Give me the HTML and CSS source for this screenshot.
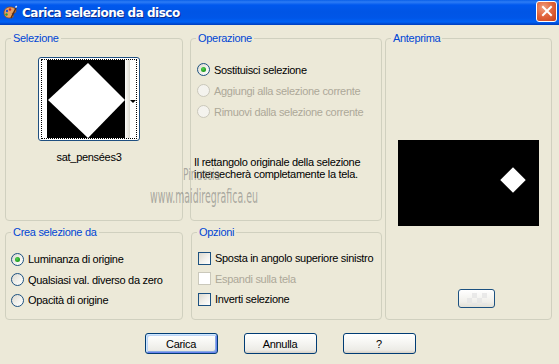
FILE: index.html
```html
<!DOCTYPE html>
<html>
<head>
<meta charset="utf-8">
<link rel="stylesheet" href="styles.css">
</head>
<body>
<div class="window">
  <div class="titlebar">
    <svg class="app-icon" width="16" height="16" viewBox="0 0 16 16">
      <path d="M2 8c0-4 3-6 6-6 4 0 6 2 6 4 0 2-2 2-3 2s-1 1 0 2c1 1 0 3-3 3-4 0-6-2-6-5z" fill="#E8A060" stroke="#8A4A1A" stroke-width="0.8"/>
      <circle cx="5" cy="6" r="1.2" fill="#2050D0"/>
      <circle cx="8" cy="4.5" r="1.2" fill="#D02020"/>
      <circle cx="4.5" cy="9.5" r="1.2" fill="#20A040"/>
      <path d="M9 13l5-10" stroke="#603010" stroke-width="1.6"/>
      <path d="M13.5 2.5l1.2-1.5" stroke="#F0F0F0" stroke-width="1.4"/>
    </svg>
    <span class="title">Carica selezione da disco</span>
    <div class="close">
      <svg width="12" height="12" viewBox="0 0 12 12"><path d="M2 2l8 8M10 2l-8 8" stroke="#fff" stroke-width="2" stroke-linecap="square"/></svg>
    </div>
  </div>
  <div class="body">
    <div class="groups">
      <fieldset class="grp g-sel">
        <legend>Selezione</legend>
        <div class="sel-wrap">
          <div class="thumb">
            <div class="focus">
              <div class="thumb-img">
                <svg width="78" height="79" viewBox="0 0 78 79"><polygon points="41,3 78,40 41,78 1,40" fill="#fff"/></svg>
              </div>
              <div class="thumb-scroll"></div>
              <div class="thumb-arrow"><span class="tri"></span></div>
            </div>
          </div>
          <div class="thumb-label">sat_pensées3</div>
        </div>
      </fieldset>

      <fieldset class="grp g-op">
        <legend>Operazione</legend>
        <div class="list op-list">
          <div class="row"><span class="radio checked"></span><span>Sostituisci selezione</span></div>
          <div class="row disabled"><span class="radio"></span><span>Aggiungi alla selezione corrente</span></div>
          <div class="row disabled"><span class="radio"></span><span>Rimuovi dalla selezione corrente</span></div>
        </div>
        <p class="note">Il rettangolo originale della selezione<br>intersecherà completamente la tela.</p>
      </fieldset>

      <fieldset class="grp g-prev">
        <legend>Anteprima</legend>
        <div class="preview">
          <span class="dot"></span>
        </div>
        <div class="mini-btn"><span class="checker"></span></div>
      </fieldset>

      <fieldset class="grp g-crea">
        <legend>Crea selezione da</legend>
        <div class="list crea-list">
          <div class="row"><span class="radio checked"></span><span>Luminanza di origine</span></div>
          <div class="row"><span class="radio"></span><span>Qualsiasi val. diverso da zero</span></div>
          <div class="row"><span class="radio"></span><span>Opacità di origine</span></div>
        </div>
      </fieldset>

      <fieldset class="grp g-opt">
        <legend>Opzioni</legend>
        <div class="list opt-list">
          <div class="row"><span class="check"></span><span>Sposta in angolo superiore sinistro</span></div>
          <div class="row disabled"><span class="check"></span><span>Espandi sulla tela</span></div>
          <div class="row"><span class="check"></span><span>Inverti selezione</span></div>
        </div>
      </fieldset>
    </div>

    <div class="buttons">
      <div class="btn default">Carica</div>
      <div class="btn">Annulla</div>
      <div class="btn">?</div>
    </div>
  </div>
  <div class="watermark">
    <div class="wm1">Pinuccia</div>
    <div class="wm2">www.maidiregrafica.eu</div>
  </div>
</div>
</body>
</html>
```

FILE: styles.css
```css
* { box-sizing: border-box; }
html, body { margin: 0; padding: 0; }
body {
  width: 559px;
  height: 364px;
  overflow: hidden;
  background: #ECE9D8;
  font-family: "Liberation Sans", Arial, sans-serif;
  font-size: 11px;
  letter-spacing: -0.3px;
  color: #000;
}
.window { position: relative; width: 559px; height: 364px; background: #ECE9D8; }

.titlebar {
  height: 25px;
  display: flex;
  align-items: center;
  padding-left: 2px;
  background: linear-gradient(to bottom, #0A5FE8 0, #2D7CF5 2px, #0058EE 5px, #0055E5 12px, #0056E8 18px, #0062F5 22px, #0046CC 24px, #0040C0 25px);
}
.app-icon { flex: none; margin-right: 4px; }
.title {
  color: #fff;
  font-family: "DejaVu Sans", sans-serif;
  font-weight: bold;
  font-size: 12px;
  letter-spacing: -0.5px;
  text-shadow: 1px 1px 0 #0A2A8A;
  flex: 1;
}
.close {
  width: 21px;
  height: 21px;
  margin-right: 2px;
  margin-top: -3px;
  border: 1px solid #fff;
  border-radius: 3px;
  background: radial-gradient(circle at 35% 30%, #F0A080 0, #E2673F 45%, #C8401A 100%);
  display: flex;
  align-items: center;
  justify-content: center;
}

.body { padding: 7px 0 0 5px; }
.groups {
  display: grid;
  grid-template-columns: 178px 199px 170px;
  grid-template-rows: 189px 94px;
  row-gap: 5px;
}
.grp {
  margin: 0;
  padding: 0;
  min-width: 0;
  border: 1px solid #D0D0BF;
  border-radius: 4px;
}
.grp legend {
  color: #0046D5;
  padding: 0 2px;
  margin-left: 5px;
  line-height: 13px;
  font-size: 11px;
}
.g-sel { grid-column: 1; grid-row: 1; }
.g-op { grid-column: 2; grid-row: 1; margin-left: 7px; }
.g-prev { grid-column: 3; grid-row: 1 / span 2; margin-left: 3px; }
.g-crea { grid-column: 1; grid-row: 2; }
.g-opt { grid-column: 2; grid-row: 2; margin-left: 8px; }

/* Selezione */
.sel-wrap { padding: 12px 0 0 32px; }
.thumb {
  width: 102px;
  height: 84px;
  border: 1px solid #1F4F80;
  border-radius: 3px;
  background: #fff;
  padding: 1px 2px;
}
.focus {
  height: 100%;
  border: 1px dotted #000;
  display: flex;
  padding-left: 5px;
}
.thumb-img { width: 78px; background: #000; display: flex; align-items: center; }
.thumb-img svg { display: block; }
.thumb-scroll { width: 9px; background: linear-gradient(to right, #FAFAF8, #E6E4DC 70%, #D8D6CC); }
.thumb-arrow { flex: 1; display: flex; align-items: center; justify-content: center; padding-top: 4px; }
.tri { width: 0; height: 0; border-left: 3px solid transparent; border-right: 3px solid transparent; border-top: 3px solid #000; }
.thumb-label { width: 102px; text-align: center; margin-top: 10px; line-height: 13px; }

/* lists */
.list { display: flex; flex-direction: column; }
.row { display: flex; align-items: center; gap: 4px; height: 21px; white-space: nowrap; }
.row.disabled { color: #ACA899; }
.op-list { padding: 14px 0 0 6px; }
.crea-list { padding: 10px 0 0 5px; }
.crea-list .row, .opt-list .row { height: 20.5px; }
.opt-list { padding: 9px 0 0 6px; }

.radio {
  flex: none;
  width: 13px;
  height: 13px;
  border-radius: 50%;
  border: 1px solid #1C5180;
  background: linear-gradient(135deg, #DCD9CF 0, #F2F1EC 55%, #FFFFFF 100%);
  display: flex;
  align-items: center;
  justify-content: center;
}
.radio.checked::after {
  content: "";
  width: 5px;
  height: 5px;
  border-radius: 50%;
  background: radial-gradient(circle at 40% 35%, #55D255 0, #21A121 60%, #1A8A1A 100%);
}
.disabled .radio { border-color: #CAC8BB; background: #F4F3EE; }
.check {
  flex: none;
  width: 13px;
  height: 13px;
  border: 1px solid #1C5180;
  background: linear-gradient(135deg, #DCD9CF 0, #F2F1EC 55%, #FFFFFF 100%);
}
.disabled .check { border-color: #CAC8BB; background: #FFFFFF; }

.note { margin: 34px 0 0 3px; line-height: 12px; }

/* Anteprima */
.preview {
  position: relative;
  margin: 95px 0 0 12px;
  width: 141px;
  height: 86px;
  background: #000;
}
.dot {
  position: absolute;
  left: 106px;
  top: 31px;
  width: 18px;
  height: 18px;
  background: #fff;
  transform: rotate(45deg);
}
.mini-btn {
  margin: 63px 0 0 72px;
  width: 37px;
  height: 19px;
  border: 1px solid #1C5180;
  border-radius: 3px;
  background: linear-gradient(#FFFFFF, #F0EFEA 70%, #E2E0D6);
  display: flex;
  align-items: center;
  justify-content: center;
}
.checker {
  width: 20px;
  height: 12px;
  background:
    linear-gradient(45deg, #E6E6E6 25%, transparent 25%, transparent 75%, #E6E6E6 75%),
    linear-gradient(45deg, #E6E6E6 25%, transparent 25%, transparent 75%, #E6E6E6 75%);
  background-size: 10px 10px;
  background-position: 0 0, 5px 5px;
  opacity: 0.8;
}

/* Buttons */
.buttons {
  display: flex;
  justify-content: center;
  gap: 26px;
  margin-top: 13px;
  padding-right: 4px;
}
.btn {
  width: 73px;
  height: 21px;
  border: 1px solid #003C74;
  border-radius: 3px;
  background: linear-gradient(#FFFFFF 0, #F7F7F4 40%, #ECEBE6 85%, #D6D0C5 100%);
  display: flex;
  align-items: center;
  justify-content: center;
}
.btn.default {
  box-shadow: inset 1px 1px 0 #CEE7FF, inset -1px -1px 0 #6982EE, inset 2px 2px 0 #BCD4F6, inset -2px -2px 0 #89ADE4;
}

/* watermark */
.watermark {
  position: absolute;
  left: 150px;
  top: 166px;
  color: rgba(110, 110, 110, 0.55);
  font-family: "DejaVu Sans", sans-serif;
  letter-spacing: 0;
  pointer-events: none;
}
.wm1 { margin-left: 33px; font-size: 15px; line-height: 18px; transform: scaleX(0.6); transform-origin: left; }
.wm2 { font-size: 20px; line-height: 24px; transform: scaleX(0.47); transform-origin: left; }
```
